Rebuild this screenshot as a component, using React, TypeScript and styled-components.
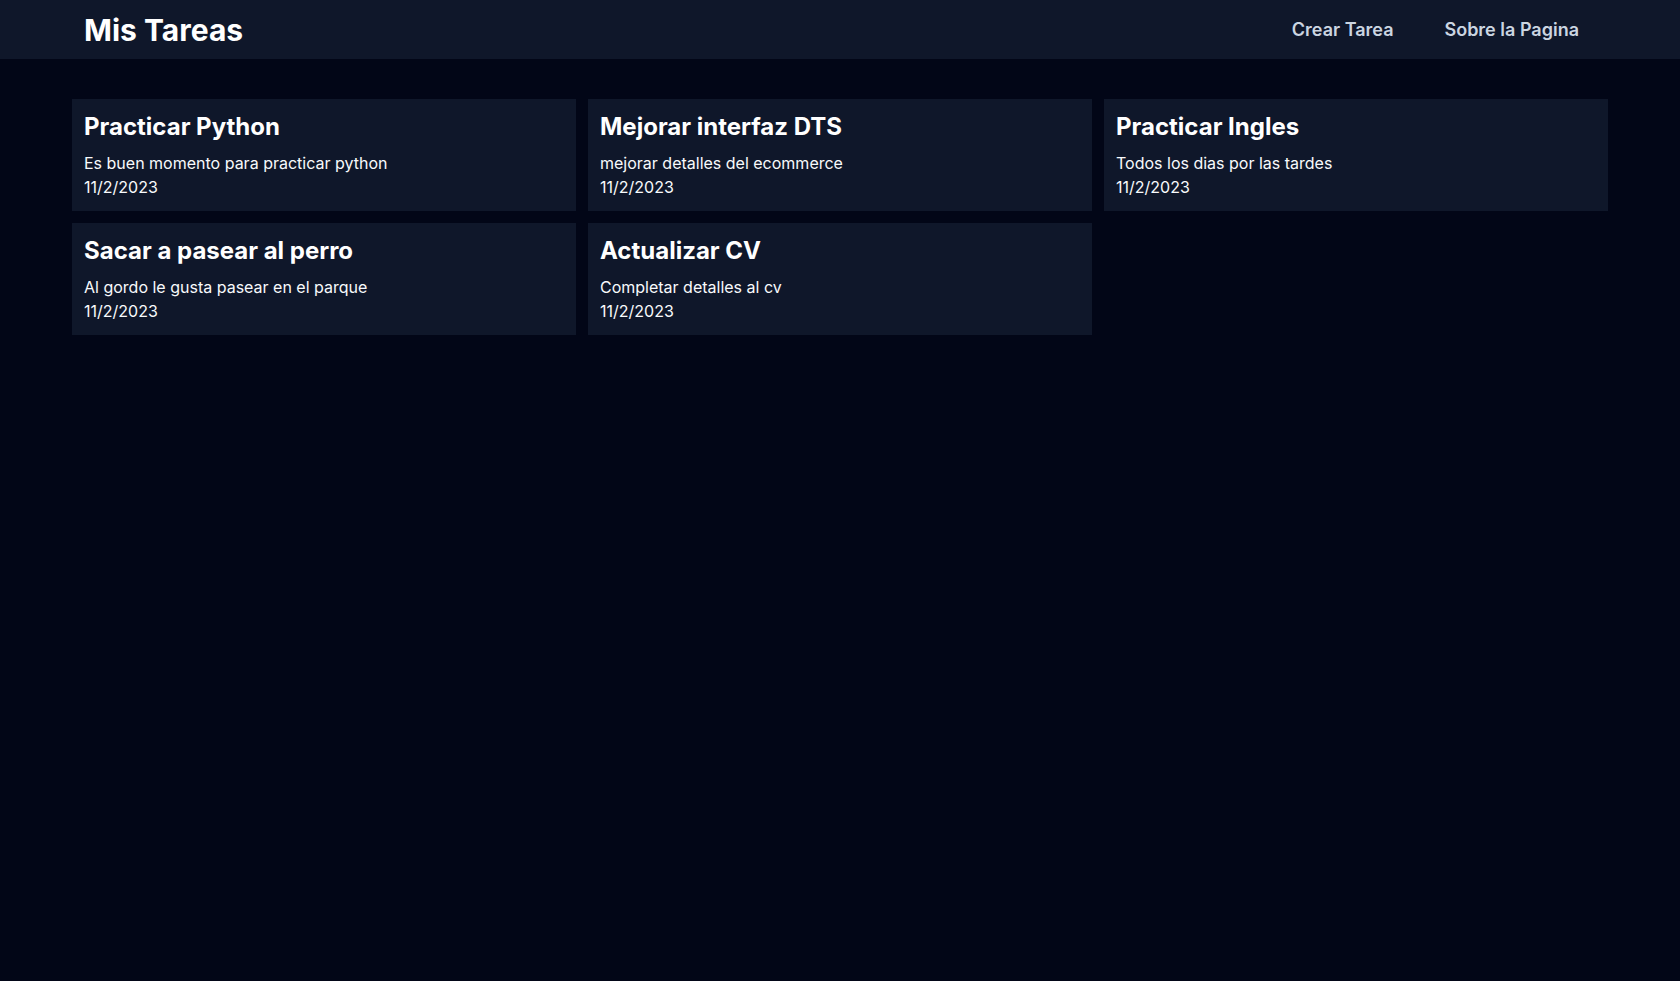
import React from "react";
import styled, { createGlobalStyle } from "styled-components";

const GlobalStyle = createGlobalStyle`
  * { box-sizing: border-box; }
  html, body { margin: 0; padding: 0; background: #020617; min-height: 100%; }
  body { font-family: Inter, "Noto Sans", sans-serif; color: #ffffff; }
`;

const Page = styled.div`
  min-height: 981px;
  background: #020617;
`;

const NavBar = styled.header`
  background: #0f172a;
  height: 59px;
`;

const NavInner = styled.div`
  max-width: 1536px;
  margin: 0 auto;
  height: 100%;
  padding: 0 29px 0 12px;
  display: flex;
  align-items: center;
  justify-content: space-between;
`;

const Brand = styled.h1`
  margin: 0;
  font-size: 30px;
  line-height: 36px;
  font-weight: 700;
  color: #ffffff;
  letter-spacing: 0;
`;

const NavLinks = styled.nav`
  display: flex;
  gap: 51px;
`;

const NavLink = styled.a`
  font-size: 18px;
  line-height: 28px;
  font-weight: 600;
  color: #cbd5e1;
  text-decoration: none;
  cursor: pointer;
`;

const Main = styled.main`
  max-width: 1536px;
  margin: 0 auto;
  padding-top: 40px;
`;

const Grid = styled.div`
  display: grid;
  grid-template-columns: repeat(3, 1fr);
  gap: 12px;
`;

const Card = styled.div`
  background: #0f172a;
  padding: 12px;
`;

const CardTitle = styled.h2`
  margin: 0 0 8px;
  font-size: 24px;
  line-height: 32px;
  font-weight: 700;
  color: #ffffff;
`;

const CardText = styled.p`
  margin: 0;
  font-size: 16px;
  line-height: 24px;
  color: #f8fafc;
`;

const tasks = [
  { title: "Practicar Python", desc: "Es buen momento para practicar python", date: "11/2/2023" },
  { title: "Mejorar interfaz DTS", desc: "mejorar detalles del ecommerce", date: "11/2/2023" },
  { title: "Practicar Ingles", desc: "Todos los dias por las tardes", date: "11/2/2023" },
  { title: "Sacar a pasear al perro", desc: "Al gordo le gusta pasear en el parque", date: "11/2/2023" },
  { title: "Actualizar CV", desc: "Completar detalles al cv", date: "11/2/2023" },
];

export default function App() {
  return (
    <Page>
      <GlobalStyle />
      <NavBar>
        <NavInner>
          <Brand>Mis Tareas</Brand>
          <NavLinks>
            <NavLink>Crear Tarea</NavLink>
            <NavLink>Sobre la Pagina</NavLink>
          </NavLinks>
        </NavInner>
      </NavBar>
      <Main>
        <Grid>
          {tasks.map((t) => (
            <Card key={t.title}>
              <CardTitle>{t.title}</CardTitle>
              <CardText>{t.desc}</CardText>
              <CardText>{t.date}</CardText>
            </Card>
          ))}
        </Grid>
      </Main>
    </Page>
  );
}
